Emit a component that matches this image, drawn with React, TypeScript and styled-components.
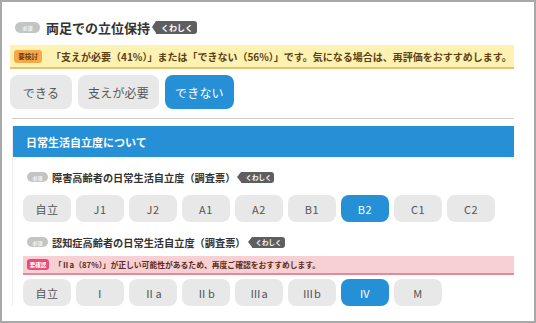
import styled, { createGlobalStyle } from 'styled-components'

const GlobalStyle = createGlobalStyle`
  html, body {
    margin: 0;
    padding: 0;
    background: #fff;
    font-family: "Noto Sans CJK JP", "Noto Sans", sans-serif;
  }
`

const Frame = styled.div`
  box-sizing: border-box;
  width: 536px;
  height: 323px;
  border: 2px solid #a9a9a9;
  padding: 16px 20px 0 8px;
  overflow: hidden;
  background: #fff;
`

const TitleRow = styled.div<{ small?: boolean }>`
  display: flex;
  align-items: center;
  gap: ${p => (p.small ? '4px' : '6px')};
  padding-left: ${p => (p.small ? '4px' : '5px')};
  height: ${p => (p.small ? '16px' : '18px')};
`

const RequiredBadge = styled.span<{ small?: boolean }>`
  display: inline-flex;
  align-items: center;
  justify-content: center;
  width: ${p => (p.small ? '21px' : '25px')};
  height: ${p => (p.small ? '10px' : '11px')};
  border-radius: 6px;
  background: #c4c4c4;
  color: #f4f4f4;
  font-size: 5px;
  font-weight: 700;
`

const Title = styled.span<{ small?: boolean }>`
  font-size: ${p => (p.small ? '10.2px' : '13px')};
  font-weight: 700;
  color: #333;
`

const DetailTag = styled.span<{ small?: boolean }>`
  position: relative;
  display: inline-flex;
  align-items: center;
  height: ${p => (p.small ? '11px' : '13px')};
  padding: 0 ${p => (p.small ? '3px' : '4px')} 0 ${p => (p.small ? '4px' : '5px')};
  margin-left: ${p => (p.small ? '2px' : '0')};
  border-radius: 0 3px 3px 0;
  background: #5e5e5e;
  color: #fff;
  font-size: ${p => (p.small ? '6.5px' : '8px')};
  font-weight: 700;
  &::before {
    content: '';
    position: absolute;
    left: -4px;
    top: 0;
    border-style: solid;
    border-width: ${p => (p.small ? '5.5px 4px 5.5px 0' : '6.5px 4px 6.5px 0')};
    border-color: transparent #5e5e5e transparent transparent;
  }
`

const Alert = styled.div<{ tone: 'warn' | 'error'; small?: boolean }>`
  display: flex;
  align-items: center;
  gap: ${p => (p.small ? '5px' : '9px')};
  box-sizing: border-box;
  height: ${p => (p.small ? '19px' : '24px')};
  margin-top: ${p => (p.small ? '6px' : '9px')};
  padding-left: 4px;
  background: ${p => (p.tone === 'warn' ? '#fdf2b2' : '#f6d0d3')};
  border-bottom: 2px solid ${p => (p.tone === 'warn' ? '#e2c56e' : '#e08a9c')};
  color: ${p => (p.tone === 'warn' ? '#5d3f12' : '#5a2c22')};
  font-size: ${p => (p.small ? '7.8px' : '10px')};
  font-weight: 700;
  white-space: nowrap;
`

const AlertBadge = styled.span<{ tone: 'warn' | 'error'; small?: boolean }>`
  display: inline-flex;
  align-items: center;
  justify-content: center;
  width: ${p => (p.small ? '22px' : '28px')};
  height: ${p => (p.small ? '11px' : '13px')};
  border-radius: 3px;
  background: ${p => (p.tone === 'warn' ? '#f6a84b' : '#e64d7a')};
  color: ${p => (p.tone === 'warn' ? '#6a3a08' : '#fff')};
  font-size: ${p => (p.small ? '5.5px' : '6.5px')};
  font-weight: 700;
`

const Options = styled.div<{ small?: boolean }>`
  display: flex;
  gap: ${p => (p.small ? '5px' : '6px')};
  margin-top: ${p => (p.small ? '5px' : '6px')};
`

const Option = styled.div<{ active?: boolean; small?: boolean }>`
  display: flex;
  align-items: center;
  justify-content: center;
  box-sizing: border-box;
  height: ${p => (p.small ? '27px' : '34px')};
  min-width: ${p => (p.small ? '48px' : '62px')};
  padding: 0 ${p => (p.small ? '0' : '10px')};
  border-radius: 8px;
  background: ${p => (p.active ? '#2690d7' : '#e8e8e8')};
  color: ${p => (p.active ? '#fff' : '#555')};
  font-size: ${p => (p.small ? '11px' : '12px')};
  letter-spacing: ${p => (p.small ? '0.5px' : '0.2px')};
`

const Divider = styled.hr`
  margin: 9px 0 0 2px;
  border: none;
  border-top: 1px solid #cfcfcf;
`

const Card = styled.section`
  margin: 7px 0 0 2px;
  border-left: 1px solid #ededed;
`

const CardHeader = styled.div`
  display: flex;
  align-items: center;
  height: 31px;
  padding-left: 13px;
  background: #2690d7;
  color: #fff;
  font-size: 11px;
  font-weight: 700;
`

const CardBody = styled.div`
  padding: 12px 0 0 10px;
`

const Group = styled.div`
  & + & {
    margin-top: 12px;
  }
`

const mobility = ['自立', 'J1', 'J2', 'A1', 'A2', 'B1', 'B2', 'C1', 'C2']
const dementia = ['自立', 'Ⅰ', 'Ⅱa', 'Ⅱb', 'Ⅲa', 'Ⅲb', 'Ⅳ', 'M']

export default function App() {
  return (
    <>
      <GlobalStyle />
      <Frame>
        <TitleRow>
          <RequiredBadge>必須</RequiredBadge>
          <Title>両足での立位保持</Title>
          <DetailTag>くわしく</DetailTag>
        </TitleRow>
        <Alert tone="warn">
          <AlertBadge tone="warn">要検討</AlertBadge>
          「支えが必要（41%）」または「できない（56%）」です。気になる場合は、再評価をおすすめします。
        </Alert>
        <Options>
          <Option>できる</Option>
          <Option>支えが必要</Option>
          <Option active>できない</Option>
        </Options>
        <Divider />
        <Card>
          <CardHeader>日常生活自立度について</CardHeader>
          <CardBody>
            <Group>
              <TitleRow small>
                <RequiredBadge small>必須</RequiredBadge>
                <Title small>障害高齢者の日常生活自立度（調査票）</Title>
                <DetailTag small>くわしく</DetailTag>
              </TitleRow>
              <Options small style={{ marginTop: 10 }}>
                {mobility.map(l => (
                  <Option small key={l} active={l === 'B2'}>{l}</Option>
                ))}
              </Options>
            </Group>
            <Group>
              <TitleRow small>
                <RequiredBadge small>必須</RequiredBadge>
                <Title small>認知症高齢者の日常生活自立度（調査票）</Title>
                <DetailTag small>くわしく</DetailTag>
              </TitleRow>
              <Alert tone="error" small>
                <AlertBadge tone="error" small>要確認</AlertBadge>
                「Ⅱa（87%）」が正しい可能性があるため、再度ご確認をおすすめします。
              </Alert>
              <Options small style={{ marginTop: 4 }}>
                {dementia.map(l => (
                  <Option small key={l} active={l === 'Ⅳ'}>{l}</Option>
                ))}
              </Options>
            </Group>
          </CardBody>
        </Card>
      </Frame>
    </>
  )
}
